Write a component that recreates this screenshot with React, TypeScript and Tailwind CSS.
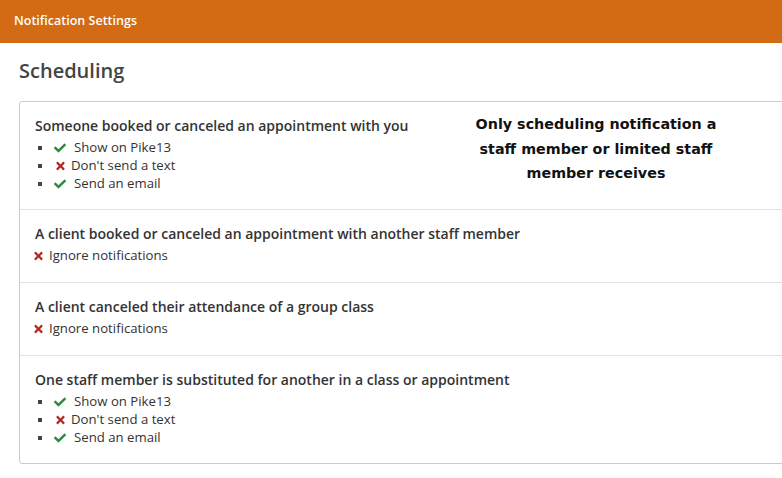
import React from "react";

type Item = { ok: boolean; label: string };

const sections: { title: string; items: Item[] }[] = [
  {
    title: "Someone booked or canceled an appointment with you",
    items: [
      { ok: true, label: "Show on Pike13" },
      { ok: false, label: "Don't send a text" },
      { ok: true, label: "Send an email" },
    ],
  },
  {
    title: "A client booked or canceled an appointment with another staff member",
    items: [{ ok: false, label: "Ignore notifications" }],
  },
  {
    title: "A client canceled their attendance of a group class",
    items: [{ ok: false, label: "Ignore notifications" }],
  },
  {
    title: "One staff member is substituted for another in a class or appointment",
    items: [
      { ok: true, label: "Show on Pike13" },
      { ok: false, label: "Don't send a text" },
      { ok: true, label: "Send an email" },
    ],
  },
];

const Check = () => (
  <svg viewBox="0 0 512 512" className="w-[12px] h-[12px] fill-[#2a8a3e]">
    <path d="M173.9 439.4l-166.4-166.4c-10-10-10-26.2 0-36.2l36.2-36.2c10-10 26.2-10 36.2 0L192 312.7 432.1 72.6c10-10 26.2-10 36.2 0l36.2 36.2c10 10 10 26.2 0 36.2L210.1 439.4c-10 10-26.2 10-36.2 0z" />
  </svg>
);

const Cross = () => (
  <svg viewBox="0 0 352 512" className="w-[9px] h-[12px] fill-[#b3261e]">
    <path d="M242.7 256l100.1-100.1c12.3-12.3 12.3-32.2 0-44.5l-22.2-22.2c-12.3-12.3-32.2-12.3-44.5 0L176 189.3 75.9 89.2c-12.3-12.3-32.2-12.3-44.5 0L9.2 111.5c-12.3 12.3-12.3 32.2 0 44.5L109.3 256 9.2 356.1c-12.3 12.3-12.3 32.2 0 44.5l22.2 22.2c12.3 12.3 32.2 12.3 44.5 0L176 322.7l100.1 100.1c12.3 12.3 32.2 12.3 44.5 0l22.2-22.2c12.3-12.3 12.3-32.2 0-44.5L242.7 256z" />
  </svg>
);

const Status = ({ ok }: { ok: boolean }) => (ok ? <Check /> : <Cross />);

export default function App() {
  return (
    <div className="w-[782px] h-[478px] overflow-hidden bg-white font-['Open_Sans',sans-serif] text-[#333]">
      <div className="h-[43px] bg-[#d36a14] flex items-center pl-[14px]">
        <span className="text-white text-[12.5px] font-semibold">Notification Settings</span>
      </div>

      <h2 className="pl-[19px] pt-[15px] text-[20px] font-semibold text-[#444] leading-[26px]">Scheduling</h2>

      <div className="relative ml-[19px] mt-[17px] w-[800px] border border-[#ccc] rounded-[3px]">
        {sections.map((s, i) => (
          <div
            key={i}
            className={`pl-[15px] pt-[15px] ${s.items.length > 1 ? "pb-[16px]" : "pb-[17px]"} ${i > 0 ? "border-t border-[#e2e2e2]" : ""}`}
          >
            <div className="text-[14px] font-semibold leading-[18px]">{s.title}</div>
            {s.items.length > 1 ? (
              <ul className="mt-[4px]">
                {s.items.map((it, j) => (
                  <li key={j} className="flex items-center h-[18px] text-[13.2px]">
                    <span className="w-[4px] h-[4px] bg-[#444] ml-[3px] mr-[12px]" />
                    <span className="w-[12px] flex justify-center"><Status ok={it.ok} /></span>
                    <span className={it.ok ? "ml-[8px]" : "ml-[5px]"}>{it.label}</span>
                  </li>
                ))}
              </ul>
            ) : (
              <div className="mt-[4px] flex items-center h-[18px] text-[13.2px]">
                <span className="-ml-[1px] flex"><Cross /></span>
                <span className="ml-[6px]">{s.items[0].label}</span>
              </div>
            )}
          </div>
        ))}

        <div className="absolute left-[436px] top-[10px] w-[280px] text-center font-['DejaVu_Sans',sans-serif] font-bold text-[14.3px] leading-[24.5px] text-[#111]">
          Only scheduling notification a staff member or limited staff member receives
        </div>
      </div>
    </div>
  );
}
